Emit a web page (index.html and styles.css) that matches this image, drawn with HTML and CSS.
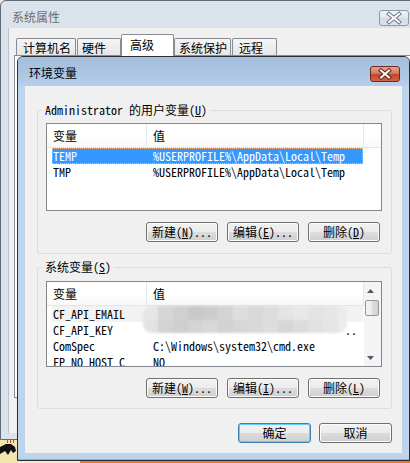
FILE: index.html
```html
<!DOCTYPE html>
<html lang="zh-CN">
<head>
<meta charset="utf-8">
<title>环境变量</title>
<link rel="stylesheet" href="styles.css">
</head>
<body>
<svg class="wallpaper" width="17" height="25" viewBox="0 0 17 25">
  <rect width="17" height="25" fill="#f3e6ad"/>
  <rect x="7" y="2" width="1" height="3" fill="#3a78c8"/>
  <rect x="10" y="2" width="1" height="3" fill="#d04040"/>
  <rect x="13" y="2" width="1" height="3" fill="#3a78c8"/>
  <path d="M0 9 L6 6 L11 6 L15 9 L16 13 L13 15 L11 12 L8 17 L5 13 L0 16 Z" fill="#111"/>
</svg>

<div class="outer">
  <div class="outer-title">
    <span class="ttl ttl-inactive">系统属性</span>
    <span class="xbtn xgray">
      <svg width="30" height="16" viewBox="0 0 30 16">
        <path d="M10 4 L20 12 M20 4 L10 12" stroke="#6b7684" stroke-width="4" stroke-linecap="square"/>
        <path d="M10 4 L20 12 M20 4 L10 12" stroke="#fff" stroke-width="2" stroke-linecap="square"/>
      </svg>
    </span>
  </div>
  <div class="outer-body">
    <div class="tabs">
      <div class="tab t1">计算机名</div>
      <div class="tab t2">硬件</div>
      <div class="tab t3 sel">高级</div>
      <div class="tab t4">系统保护</div>
      <div class="tab t5">远程</div>
    </div>
    <div class="panel"></div>
  </div>
</div>

<div class="dlg">
  <div class="dlg-title">
    <span class="ttl">环境变量</span>
    <span class="xbtn xred">
      <svg width="30" height="16" viewBox="0 0 30 16">
        <path d="M11 4.5 L19 11.5 M19 4.5 L11 11.5" stroke="#5b2419" stroke-width="4" stroke-linecap="square"/>
        <path d="M11 4.5 L19 11.5 M19 4.5 L11 11.5" stroke="#fff" stroke-width="2" stroke-linecap="square"/>
      </svg>
    </span>
  </div>
  <div class="dlg-body">
    <fieldset class="grp g1">
      <legend>Administrator 的用户变量(<u>U</u>)</legend>
      <div class="list l1">
        <div class="lv-main">
          <div class="hdr">
            <div class="hc h1">变量</div>
            <div class="hc h2">值</div>
            <div class="hc h3"></div>
          </div>
          <div class="row sel"><div class="c1">TEMP</div><div class="c2">%USERPROFILE%\AppData\Local\Temp</div></div>
          <div class="row"><div class="c1">TMP</div><div class="c2">%USERPROFILE%\AppData\Local\Temp</div></div>
        </div>
      </div>
      <div class="btnrow">
        <button class="btn">新建(<u>N</u>)...</button>
        <button class="btn">编辑(<u>E</u>)...</button>
        <button class="btn">删除(<u>D</u>)</button>
      </div>
    </fieldset>

    <fieldset class="grp g2">
      <legend>系统变量(<u>S</u>)</legend>
      <div class="list l2">
        <div class="lv-main">
          <div class="hdr">
            <div class="hc h1">变量</div>
            <div class="hc h2 last">值</div>
          </div>
          <div class="row hot"><div class="c1">CF_API_EMAIL</div><div class="c2"></div></div>
          <div class="row"><div class="c1">CF_API_KEY</div><div class="c2"><span class="dots">..</span></div></div>
          <div class="row"><div class="c1">ComSpec</div><div class="c2">C:\Windows\system32\cmd.exe</div></div>
          <div class="row"><div class="c1">FP_NO_HOST_C</div><div class="c2">NO</div></div>
          <div class="redact">
            <div class="rr r-top"></div>
            <div class="rr r-bot"></div>
          </div>
        </div>
        <div class="vscroll">
          <div class="sb-arrow">
            <svg width="7" height="4" viewBox="0 0 7 4"><path d="M0 4 L3.5 0 L7 4 Z" fill="#4f5a66"/></svg>
          </div>
          <div class="sb-thumb"></div>
          <div class="sb-track"></div>
          <div class="sb-arrow">
            <svg width="7" height="4" viewBox="0 0 7 4"><path d="M0 0 L3.5 4 L7 0 Z" fill="#4f5a66"/></svg>
          </div>
        </div>
      </div>
      <div class="btnrow">
        <button class="btn">新建(<u>W</u>)...</button>
        <button class="btn">编辑(<u>I</u>)...</button>
        <button class="btn">删除(<u>L</u>)</button>
      </div>
    </fieldset>

    <div class="actions">
      <button class="btn btn-main default">确定</button>
      <button class="btn btn-main">取消</button>
    </div>
  </div>
</div>
</body>
</html>
```

FILE: styles.css
```css
* { box-sizing: border-box; }

html, body { margin: 0; padding: 0; }

body {
  width: 410px;
  height: 463px;
  overflow: hidden;
  position: relative;
  background: linear-gradient(to right, #f4eacb 0, #f4eacb 80px, #e8782a 80px);
  font: 12px/16px "Noto Sans Mono CJK SC", "Liberation Mono", "Noto Sans CJK SC", monospace;
  color: #000;
}

.wallpaper { position: absolute; left: 0; top: 438px; display: block; }

/* ---------- windows ---------- */
.outer {
  position: absolute;
  left: 0;
  top: 0;
  width: 424px;
  height: 440px;
  border: 1px solid #5f6b79;
  border-radius: 6px 6px 0 0;
  background: #dae3ec;
  padding: 0 7px 6px;
  display: flex;
  flex-direction: column;
}

.outer-title {
  height: 27px;
  display: flex;
  align-items: flex-start;
}

.ttl {
  font-family: "Noto Sans CJK SC", "Liberation Sans", sans-serif;
  font-size: 12px;
  line-height: 16px;
  margin: 8px 0 0 4px;
  color: #000;
}
.ttl-inactive { color: #6d6d6d; }

.xbtn {
  display: block;
  width: 30px;
  height: 16px;
  border-radius: 3px;
  margin-left: auto;
}
.xbtn svg { display: block; }

.xgray {
  margin: 9px 7px 0 auto;
  border: 1px solid #8d9aab;
  background: linear-gradient(#f1f4f8 0%, #e1e7ee 48%, #d2dae4 52%, #dde4ec 100%);
}
.xgray svg { margin: -1px 0 0 -1px; }

.outer-body {
  flex: 1;
  background: #f0f0f0;
  border-left: 1px solid #b6c3d0;
  display: flex;
  flex-direction: column;
  padding-bottom: 35px;
}

.tabs {
  height: 27px;
  display: flex;
  align-items: flex-end;
  padding-left: 7px;
}

.tab {
  height: 17px;
  border: 1px solid #898c95;
  border-bottom: none;
  border-radius: 2px 2px 0 0;
  background: linear-gradient(#f5f5f5, #e6e6e6);
  font-size: 12px;
  line-height: 16px;
  padding-top: 1px;
  white-space: nowrap;
}
.tab.sel {
  height: 22px;
  background: #fff;
  margin-bottom: -1px;
  padding-top: 2px;
  position: relative;
  z-index: 1;
}
.t1 { width: 60px; padding-left: 6px; }
.t2 { width: 44px; padding-left: 4px; margin-left: 1px; }
.t3 { width: 53px; padding-left: 8px; }
.t4 { width: 57px; padding-left: 4px; }
.t5 { width: 45px; padding-left: 6px; margin-left: 1px; }

.panel {
  flex: 1;
  margin-left: 5px;
  border: 1px solid #898c95;
  background: #fff;
}

/* ---------- dialog ---------- */
.dlg {
  position: absolute;
  left: 17px;
  top: 56px;
  width: 393px;
  height: 405px;
  border: 1px solid #2a2f36;
  border-radius: 6px 6px 0 0;
  background: #bdd4ec;
  padding: 0 7px 7px;
  display: flex;
  flex-direction: column;
  box-shadow: inset 0 -1px 0 #55c8e8;
}

.dlg-title {
  height: 29px;
  margin: 0 -7px;
  padding: 0 7px;
  display: flex;
  align-items: flex-start;
  border-radius: 5px 5px 0 0;
  background: linear-gradient(#a4bfdd 0%, #aac4e1 50%, #b8cfe9 100%);
}

.xred {
  margin: 9px 2px 0 auto;
  border: 1px solid #6e2a1d;
  background: linear-gradient(#e6a190 0%, #d6775f 46%, #c3452c 54%, #cf664d 100%);
}
.xred svg { margin: -1px 0 0 -1px; }

.dlg-body {
  height: 367px;
  background: #f0f0f0;
  padding: 17px 10px 10px 12px;
  display: flex;
  flex-direction: column;
}

/* ---------- group boxes ---------- */
.grp {
  margin: 0;
  min-inline-size: 0;
  border: 1px solid #d5dfe5;
  border-radius: 3px;
  padding: 6px 9px 11px 8px;
}
.g2 {
  margin-top: 6px;
  padding-top: 7px;
  padding-bottom: 10px;
}

legend {
  padding: 0 3px;
  margin-left: -4px;
  line-height: 14px;
  font-size: 12px;
}

/* ---------- list views ---------- */
.list {
  border: 1px solid #828790;
  background: #fff;
  display: flex;
  overflow: hidden;
}
.l1 { height: 88px; }
.l2 { height: 86px; }

.lv-main {
  flex: 1;
  position: relative;
  overflow: hidden;
}

.hdr {
  height: 24px;
  display: flex;
  border-bottom: 1px solid #e5e5e5;
  background: linear-gradient(#ffffff 0%, #ffffff 50%, #f7f8f9 100%);
}
.hc {
  line-height: 16px;
  padding: 4px 0 0 6px;
  white-space: nowrap;
}
.h1 { width: 100px; border-right: 1px solid #e3e8ee; }
.h2 { width: 217px; border-right: 1px solid #e3e8ee; }
.h3 { flex: 1; }

.row {
  display: flex;
  height: 16px;
  width: 311px;
  margin-left: 5px;
  line-height: 16px;
  white-space: nowrap;
}
.row.sel {
  background: #3399ff;
  color: #fff;
  outline: 1px dotted #f7b98a;
  outline-offset: -1px;
}
.row.hot { background: #f2f2f2; }

.c1 { width: 100px; padding-left: 1px; overflow: hidden; }
.c2 { flex: 1; padding-left: 1px; overflow: hidden; }

.dots { padding-left: 192px; }

.redact {
  position: absolute;
  left: 96px;
  top: 24px;
  width: 204px;
  height: 27px;
  border-radius: 9px;
  overflow: hidden;
  filter: blur(1px);
  display: flex;
  flex-direction: column;
}
.rr { flex: 1; }
.r-top {
  background: linear-gradient(to right,
    #e6e6e6 0 15px, #d6d6d6 15px 30px, #d0d0d0 30px 45px, #c9c9c9 45px 60px,
    #cccccc 60px 75px, #d3d3d3 75px 90px, #dedede 90px 105px, #d8d8d8 105px 120px,
    #dcdcdc 120px 135px, #e4e4e4 135px 150px, #e8e8e8 150px 165px, #e3e3e3 165px 180px,
    #e6e6e6 180px 195px, #ebebeb 195px);
}
.r-bot {
  background: linear-gradient(to right,
    #e3e3e3 0 15px, #d3d3d3 15px 30px, #cfcfcf 30px 45px, #d4d4d4 45px 60px,
    #d8d8d8 60px 75px, #d2d2d2 75px 90px, #d6d6d6 90px 105px, #d9d9d9 105px 120px,
    #dddddd 120px 135px, #d7d7d7 135px 150px, #dcdcdc 150px 165px, #e1e1e1 165px 180px,
    #e5e5e5 180px 195px, #ececec 195px);
}

.vscroll {
  width: 17px;
  background: #f4f4f4;
  display: flex;
  flex-direction: column;
}
.sb-arrow {
  height: 17px;
  display: flex;
  align-items: center;
  justify-content: center;
}
.sb-arrow svg { display: block; margin-right: 4px; }
.sb-thumb {
  height: 16px;
  margin: 1px 2px 0 1px;
  border: 1px solid #969696;
  border-radius: 2px;
  background: linear-gradient(to right, #f4f4f4 0%, #ececec 50%, #dcdcdc 50%, #d4d4d4 100%);
}
.sb-track { flex: 1; }

/* ---------- buttons ---------- */
.btnrow {
  display: flex;
  justify-content: flex-end;
  gap: 9px;
  margin-top: 11px;
  padding-right: 2px;
}

.btn {
  width: 72px;
  height: 20px;
  margin: 0;
  padding: 0;
  border: 1px solid #707070;
  border-radius: 3px;
  background: linear-gradient(#f2f2f2 0%, #ebebeb 50%, #dddddd 50%, #cfcfcf 100%);
  box-shadow: inset 0 0 0 1px #fbfbfb;
  font: inherit;
  line-height: 16px;
  color: #000;
  text-align: center;
  white-space: nowrap;
}

.actions {
  display: flex;
  justify-content: flex-end;
  gap: 8px;
  margin-top: 14px;
}
.btn-main { width: 73px; }
.btn.default {
  border-color: #3c7fb1;
  box-shadow: inset 0 0 0 1px #62cdf8;
}
```
